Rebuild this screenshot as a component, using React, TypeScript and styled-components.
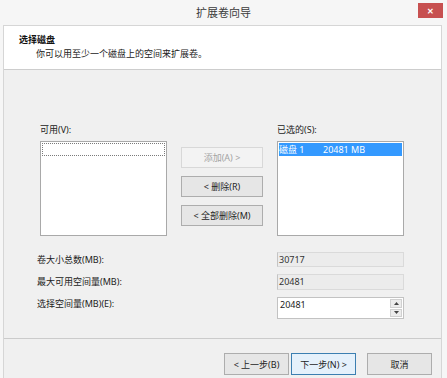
import styled, { createGlobalStyle } from 'styled-components';

const GlobalStyle = createGlobalStyle`
  html, body {
    margin: 0;
    padding: 0;
    background: #ffffff;
  }

  body {
    font-family: "Noto Sans", "Noto Sans CJK SC", sans-serif;
    font-size: 9px;
    color: #1e1e1e;
  }
`;

function App() {
  return (
    <>
      <GlobalStyle />
      <Window>
        <TitleBar>
          <Title>扩展卷向导</Title>
          <CloseButton>✕</CloseButton>
        </TitleBar>

        <Frame>
          <Header>
            <HeaderTitle>选择磁盘</HeaderTitle>
            <HeaderDesc>你可以用至少一个磁盘上的空间来扩展卷。</HeaderDesc>
          </Header>

          <Content>
            <Transfer>
              <ListLabel column={1}>可用(V):</ListLabel>
              <ListLabel column={3}>已选的(S):</ListLabel>

              <ListBox column={1}>
                <FocusRow />
              </ListBox>

              <MoveButtons>
                <Button disabled>添加(A) &gt;</Button>
                <Button>&lt; 删除(R)</Button>
                <Button>&lt; 全部删除(M)</Button>
              </MoveButtons>

              <ListBox column={3}>
                <SelectedRow>
                  <span>磁盘 1</span>
                  <span>20481 MB</span>
                </SelectedRow>
              </ListBox>
            </Transfer>

            <Fields>
              <FieldLabel>卷大小总数(MB):</FieldLabel>
              <ReadonlyField height={15}>30717</ReadonlyField>

              <FieldLabel>最大可用空间量(MB):</FieldLabel>
              <ReadonlyField height={16}>20481</ReadonlyField>

              <FieldLabel top>选择空间量(MB)(E):</FieldLabel>
              <SpinField>
                <SpinValue>20481</SpinValue>
                <SpinButtons>
                  <SpinButton>
                    <svg width="5" height="3" viewBox="0 0 5 3">
                      <path d="M0 3 L2.5 0 L5 3 Z" fill="#444" />
                    </svg>
                  </SpinButton>
                  <SpinButton>
                    <svg width="5" height="3" viewBox="0 0 5 3">
                      <path d="M0 0 L2.5 3 L5 0 Z" fill="#444" />
                    </svg>
                  </SpinButton>
                </SpinButtons>
              </SpinField>
            </Fields>
          </Content>

          <Footer>
            <Button wide>&lt; 上一步(B)</Button>
            <Button wide primary>下一步(N) &gt;</Button>
            <Button wide cancel>取消</Button>
          </Footer>
        </Frame>
      </Window>
    </>
  );
}

export default App;

const Window = styled.div`
  width: 447px;
  height: 378px;
  background-color: #f6f6f6;
  display: flex;
  flex-direction: column;
  overflow: hidden;
`;

const TitleBar = styled.div`
  height: 25px;
  flex-shrink: 0;
  display: grid;
  grid-template-columns: 1fr auto 1fr;
  align-items: start;
`;

const Title = styled.div`
  grid-column: 2;
  font-size: 11px;
  line-height: 26px;
  color: #3a3a3a;
`;

const CloseButton = styled.div`
  justify-self: end;
  margin: 3px 4px 0 0;
  width: 25px;
  height: 15px;
  background-color: #c75050;
  color: #ffffff;
  font-size: 8px;
  font-weight: bold;
  display: flex;
  align-items: center;
  justify-content: center;
`;

const Frame = styled.div`
  flex: 1;
  margin: 0 5px 0 3px;
  border: 1px solid #d6d6d6;
  border-bottom: none;
  background-color: #f0f0f0;
  display: flex;
  flex-direction: column;
`;

const Header = styled.div`
  height: 44px;
  flex-shrink: 0;
  box-sizing: border-box;
  padding: 7px 0 0 15px;
  background-color: #ffffff;
  border-bottom: 1px solid #cdcdcd;
  line-height: 13px;
`;

const HeaderTitle = styled.div`
  font-weight: bold;
  color: #111111;
`;

const HeaderDesc = styled.div`
  padding-left: 17px;
  margin-top: 1px;
  color: #222222;
`;

const Content = styled.div`
  height: 268px;
  flex-shrink: 0;
  box-sizing: border-box;
  padding: 54px 0 0 36px;
`;

const Transfer = styled.div`
  display: grid;
  grid-template-columns: 127px 82px 127px;
  grid-template-rows: 12px 95px;
  column-gap: 14px;
  row-gap: 5px;
`;

const ListLabel = styled.div<{ column: number }>`
  grid-column: ${({ column }) => column};
  grid-row: 1;
  line-height: 12px;
  color: #222222;
`;

const ListBox = styled.div<{ column: number }>`
  grid-column: ${({ column }) => column};
  grid-row: 2;
  background-color: #ffffff;
  border: 1px solid #a9a9a9;
  box-sizing: border-box;
  padding: 1px;
`;

const FocusRow = styled.div`
  height: 13px;
  box-sizing: border-box;
  border: 1px dotted #7a7a7a;
`;

const SelectedRow = styled.div`
  height: 13px;
  background-color: #3399ff;
  color: #ffffff;
  line-height: 13px;
  display: grid;
  grid-template-columns: 44px auto;
`;

const MoveButtons = styled.div`
  grid-column: 2;
  grid-row: 2;
  padding-top: 6px;
  display: flex;
  flex-direction: column;
  gap: 8px;
`;

const Button = styled.button<{ wide?: boolean; primary?: boolean; cancel?: boolean }>`
  height: 21px;
  width: ${({ wide }) => (wide ? '65px' : '100%')};
  margin-left: ${({ primary, cancel }) => (cancel ? '11px' : primary ? '2px' : '0')};
  padding: 0;
  font-family: inherit;
  font-size: 9px;
  color: #1e1e1e;
  background-color: ${({ primary }) => (primary ? '#e5f1fb' : '#e6e6e6')};
  border: 1px solid ${({ primary }) => (primary ? '#3c7fb1' : '#adadad')};
  box-sizing: border-box;

  &:disabled {
    color: #a3a3a3;
    background-color: #f3f3f3;
    border-color: #d8d8d8;
  }
`;

const Fields = styled.div`
  margin: 16px 0 0 -3px;
  display: grid;
  grid-template-columns: 240px 127px;
  row-gap: 7px;
`;

const FieldLabel = styled.div<{ top?: boolean }>`
  align-self: ${({ top }) => (top ? 'start' : 'center')};
  padding-top: ${({ top }) => (top ? '1px' : '0')};
  line-height: 12px;
  color: #222222;
`;

const ReadonlyField = styled.div<{ height: number }>`
  height: ${({ height }) => height}px;
  box-sizing: border-box;
  padding-left: 1px;
  line-height: ${({ height }) => height - 2}px;
  background-color: #ececec;
  border: 1px solid #dadada;
  border-left-color: #c4c4c4;
  color: #333333;
`;

const SpinField = styled.div`
  height: 22px;
  box-sizing: border-box;
  background-color: #ffffff;
  border: 1px solid #c2c2c2;
  display: flex;
  justify-content: space-between;
`;

const SpinValue = styled.div`
  padding: 1px 0 0 2px;
  line-height: 12px;
  color: #222222;
`;

const SpinButtons = styled.div`
  width: 12px;
  margin: 1px 1px 1px 0;
  display: flex;
  flex-direction: column;
  gap: 1px;
`;

const SpinButton = styled.div`
  flex: 1;
  background-color: #ececec;
  border: 1px solid #d0d0d0;
  display: flex;
  align-items: center;
  justify-content: center;
`;

const Footer = styled.div`
  flex: 1;
  border-top: 1px solid #cbcbcb;
  padding: 14px 9px 0 0;
  display: flex;
  justify-content: flex-end;
  align-items: flex-start;

  button {
    height: 22px;
  }
`;
